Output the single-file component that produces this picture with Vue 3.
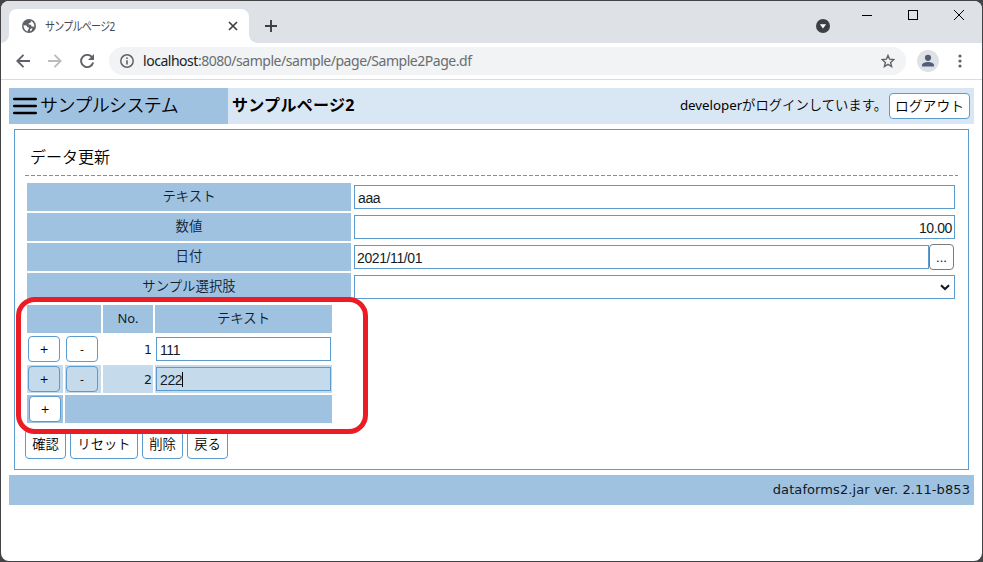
<script setup>
import { ref } from 'vue'

const fields = ref([
  { label: 'テキスト', value: 'aaa', kind: 'text' },
  { label: '数値', value: '10.00', kind: 'number' },
  { label: '日付', value: '2021/11/01', kind: 'date' },
  { label: 'サンプル選択肢', value: '', kind: 'select' },
])
const rows = ref([
  { no: 1, value: '111', active: false },
  { no: 2, value: '222', active: true },
])
const actions = ['確認', 'リセット', '削除', '戻る']
</script>

<template>
  <div class="desktop">
    <div class="window">
      <div class="tabstrip">
        <div class="tab">
          <svg class="globe" width="14" height="14" viewBox="0 0 14 14">
            <circle cx="7" cy="7" r="7" fill="#5f6368" />
            <path d="M1.5 6.3 4.6 6.4 5.3 8.2 7.1 8.6 6.7 10 5.9 10.9 5.8 12.4C3.3 11.9 1.5 9.7 1.5 6.3Z" fill="#fff" />
            <path d="M7 1.7 9.4 2.1 8.4 3.8 6.8 4.3 6.6 5.5 8.9 5.7 9.6 7.6 12.3 7.7C12.7 4.5 10.5 1.8 7 1.7Z" fill="#fff" />
            <path d="M8 10.2 10.4 9.1 9.8 11.2 8 12.2Z" fill="#fff" />
          </svg>
          <span class="tab-title">サンプルページ2</span>
          <svg class="tab-close" width="10" height="10" viewBox="0 0 10 10"><path d="M1 1 9 9M9 1 1 9" stroke="#3c4043" stroke-width="1.7" /></svg>
        </div>
        <svg class="newtab" width="12" height="12" viewBox="0 0 12 12"><path d="M6 0V12M0 6H12" stroke="#3c4043" stroke-width="1.9" /></svg>
        <div class="controls">
          <svg class="tabsearch" width="14" height="14" viewBox="0 0 14 14"><circle cx="7" cy="7" r="7" fill="#3c4043" /><path d="M3.9 5.2H10.1L7 9.4Z" fill="#fff" /></svg>
          <svg width="10" height="10" viewBox="0 0 10 10"><path d="M0 5.5H10" stroke="#000" /></svg>
          <svg width="10" height="10" viewBox="0 0 10 10"><rect x=".5" y=".5" width="9" height="9" fill="none" stroke="#000" /></svg>
          <svg width="10" height="10" viewBox="0 0 10 10"><path d="M0 0 10 10M10 0 0 10" stroke="#000" stroke-width="1" /></svg>
        </div>
      </div>
      <div class="toolbar">
        <svg class="back" width="14" height="14" viewBox="0 0 14 14"><path d="M14 7H1.4M7.5.8 1.3 7 7.5 13.2" fill="none" stroke="#5f6368" stroke-width="1.9" /></svg>
        <svg class="forward" width="14" height="14" viewBox="0 0 14 14"><path d="M0 7H12.6M6.5.8 12.7 7 6.5 13.2" fill="none" stroke="#babcbe" stroke-width="1.9" /></svg>
        <svg class="reload" width="14" height="14" viewBox="0 0 14 14"><path d="M12 3.2A6.1 6.1 0 1 0 13.1 8.6" fill="none" stroke="#5f6368" stroke-width="1.9" /><path d="M14 0V6H8Z" fill="#5f6368" /></svg>
        <div class="address">
          <svg width="14" height="14" viewBox="0 0 14 14"><circle cx="7" cy="7" r="6.2" fill="none" stroke="#5f6368" stroke-width="1.5" /><path d="M7 6.2V10.4M7 3.5V5" stroke="#5f6368" stroke-width="1.6" /></svg>
          <span class="url"><b>localhost</b>:8080/sample/sample/page/Sample2Page.df</span>
          <svg class="star" width="14" height="14" viewBox="0 0 14 14"><path d="M7 1.4 8.6 5.2 12.8 5.6 9.6 8.4 10.6 12.5 7 10.3 3.4 12.5 4.4 8.4 1.2 5.6 5.4 5.2Z" fill="none" stroke="#5f6368" stroke-width="1.4" /></svg>
        </div>
        <svg class="avatar" width="22" height="22" viewBox="0 0 22 22"><circle cx="11" cy="11" r="11" fill="#dee1e6" /><circle cx="11" cy="7.8" r="3.1" fill="#525d75" /><path d="M5 16.6V15C5 13 8.5 11.9 11 11.9S17 13 17 15V16.6Z" fill="#525d75" /></svg>
        <svg class="dots" width="4" height="14" viewBox="0 0 4 14"><g fill="#5f6368"><circle cx="2" cy="2" r="1.6" /><circle cx="2" cy="7" r="1.6" /><circle cx="2" cy="12" r="1.6" /></g></svg>
      </div>

      <div class="page">
        <header class="header">
          <div class="system">
            <svg width="24" height="18" viewBox="0 0 24 18"><path d="M1.2 2H22.8M1.2 9H22.8M1.2 16H22.8" stroke="#000" stroke-width="2.4" stroke-linecap="round" /></svg>
            <span class="system-name">サンプルシステム</span>
          </div>
          <span class="page-name">サンプルページ2</span>
          <span class="login"><span class="user">developer</span>がログインしています。</span>
          <button class="btn logout">ログアウト</button>
        </header>

        <main class="panel">
          <h1 class="title">データ更新</h1>
          <svg class="rule" width="933" height="1"><path d="M0 .5H933" stroke="#5c9bcd" stroke-dasharray="4 2" /></svg>
          <div class="form">
            <div v-for="f in fields" :key="f.label" class="field">
              <div class="label">{{ f.label }}</div>
              <div class="value">
                <div class="input" :class="f.kind">
                  <span>{{ f.value }}</span>
                  <svg v-if="f.kind === 'select'" width="10" height="7" viewBox="0 0 10 7"><path d="M1 1.2 5 5.1 9 1.2" fill="none" stroke="#111c28" stroke-width="2.1" /></svg>
                </div>
                <button v-if="f.kind === 'date'" class="btn picker">...</button>
              </div>
            </div>
          </div>

          <section class="detail">
            <div class="line head">
              <div class="cell"></div>
              <div class="cell center latin">No.</div>
              <div class="cell center">テキスト</div>
            </div>
            <div v-for="r in rows" :key="r.no" class="line" :class="{ active: r.active }">
              <div class="cell"><button class="btn small">+</button></div>
              <div class="cell"><button class="btn small">-</button></div>
              <div class="cell number-cell">{{ r.no }}</div>
              <div class="cell"><div class="input"><span>{{ r.value }}</span><i v-if="r.active" class="caret"></i></div></div>
            </div>
            <div class="line foot">
              <div class="cell"><button class="btn small">+</button></div>
              <div class="cell"></div>
            </div>
            <div class="highlight"></div>
          </section>

          <div class="actions">
            <button v-for="a in actions" :key="a" class="btn">{{ a }}</button>
          </div>
        </main>

        <footer class="footer">dataforms2.jar ver. 2.11-b853</footer>
      </div>
    </div>
  </div>
</template>

<style>
body { margin: 0; overflow: hidden; }
</style>

<style scoped>
* { box-sizing: border-box; }
svg { display: block; flex: none; }
.desktop { width: 983px; height: 562px; padding: 1px; background: #444346; font-family: "Noto Sans", "Noto Sans CJK JP", sans-serif; font-size: 13px; color: #000; }
.window { width: 981px; height: 560px; border-radius: 8px; background: #fff; overflow: hidden; }

.tabstrip { display: flex; height: 42px; padding: 8px 18px 0 8px; background: #dee1e6; }
.tab { position: relative; display: flex; align-items: center; width: 240px; height: 34px; padding: 0 12px 0 13px; background: #fff; border-radius: 8px 8px 0 0; }
.tab::before, .tab::after { content: ""; position: absolute; bottom: 0; width: 8px; height: 8px; }
.tab::before { left: -8px; background: radial-gradient(circle at 0 0, transparent 7.5px, #fff 8px); }
.tab::after { right: -8px; background: radial-gradient(circle at 100% 0, transparent 7.5px, #fff 8px); }
.tab-title { flex: 1; margin-left: 9px; padding-top: 1px; font-size: 12.5px; line-height: 18px; color: #45494d; letter-spacing: -.9px; white-space: nowrap; transform: scaleX(.8); transform-origin: 0 50%; }
.tab-close { margin-right: -1px; }
.newtab { margin: 11px 0 0 16px; }
.controls { display: flex; gap: 36px; margin-left: auto; padding-top: 1px; }
.tabsearch { margin: 9px -4px 0 0; }

.toolbar { display: flex; align-items: center; height: 37px; padding: 0 20px 0 15px; border-bottom: 1px solid #dadce0; }
.forward { margin-left: 18px; }
.reload { margin-left: 18px; }
.address { display: flex; align-items: center; width: 797px; height: 28px; margin-left: 15px; padding: 0 11px; border-radius: 14px; background: #f1f3f4; }
.url { margin-left: 9px; flex: 1; font-size: 14px; line-height: 20px; color: #696d71; letter-spacing: -.47px; white-space: nowrap; }
.url b { font-weight: 400; color: #202124; }
.avatar { margin-left: 11px; }
.dots { margin-left: auto; }

.page { padding: 8px; font-family: "Noto Sans", "Noto Sans CJK JP", sans-serif; font-weight: 350; }
.header { display: flex; align-items: center; width: 965px; height: 36px; padding-right: 4px; background: #d9e6f4; }
.system { display: flex; align-items: center; width: 219px; height: 36px; padding-left: 4px; background: #a0c2e1; }
.system-name { margin-left: 3px; padding-bottom: 2px; font-size: 18px; line-height: 26px; letter-spacing: -.6px; white-space: nowrap; }
.page-name { margin-left: 4px; padding-bottom: 2px; font-size: 16px; line-height: 24px; font-weight: 700; letter-spacing: .3px; white-space: nowrap; }
.login { margin-left: auto; padding-bottom: 3px; font-size: 13.33px; white-space: nowrap; }
.user { font-weight: 400; letter-spacing: -.03px; }

.btn { display: flex; align-items: center; justify-content: center; height: 26px; padding: 0 0 2px; border: 1px solid #5c9bcd; border-radius: 4px; background: #fff; color: #000; font: inherit; font-size: 13.33px; white-space: nowrap; }
.logout { width: 81px; margin-left: 2px; font-size: 13.8px; }

.panel { width: 955px; height: 341px; margin: 5px 0 0 5px; border: 1px solid #5c9bcd; padding: 0 10px; }
.title { height: 45px; margin: 0; padding: 14px 0 0 5px; font-size: 16px; line-height: 26px; font-weight: 350; }
.form { display: flex; flex-direction: column; gap: 2px; padding: 7px 2px 0; }
.field { display: flex; height: 28px; gap: 3px; }
.label { display: flex; align-items: center; justify-content: center; width: 324px; padding-bottom: 4px; background: #a0c2e1; color: #10202f; font-size: 13.4px; }
.value { display: flex; align-items: center; width: 601px; }
.input { display: flex; align-items: center; flex: 1; height: 24px; padding: 1px 3px 0; border: 1px solid #5c9bcd; background: #fff; color: #111c28; font-family: "Liberation Sans", sans-serif; font-size: 14px; letter-spacing: -.4px; font-weight: 400; }
.number { justify-content: flex-end; padding-right: 2px; }
.date { padding-left: 2px; }
.select { justify-content: flex-end; padding-right: 4px; }
.picker { width: 25px; margin-right: 1px; border-color: #7b7b7b; padding: 0; font-family: "Liberation Sans", sans-serif; font-size: 13px; }

.detail { position: relative; display: flex; flex-direction: column; gap: 2px; width: 305px; padding-top: 4px; margin-left: 2px; color: #111c28; }
.line { display: grid; grid-template-columns: 36px 36px 50px 177px; gap: 2px; height: 28px; }
.head { grid-template-columns: 74px 50px 177px; }
.foot { grid-template-columns: 36px 267px; }
.cell { display: flex; align-items: center; padding: 0 1px; }
.head .cell, .foot .cell { background: #a0c2e1; }
.head .cell { padding-bottom: 4px; font-size: 13.4px; }
.head .latin { padding-bottom: 2px; font-weight: 400; font-size: 13px; }
.active .cell, .active .input, .active .btn { background: #c5daeb; }
.center { justify-content: center; }
.number-cell { justify-content: flex-end; font-family: "DejaVu Sans", sans-serif; font-weight: 400; font-size: 12.5px; }
.small { width: 32px; padding: 0; font-family: "DejaVu Sans", sans-serif; font-size: 11px; font-weight: 400; }
.foot .small { margin-left: 1px; }
.caret { width: 1px; height: 15px; background: #000; }
.highlight { position: absolute; left: -11px; top: -4px; width: 352px; height: 137px; border: 5px solid #ed1c24; border-radius: 19px; }

.actions { display: flex; gap: 4px; margin-top: 6px; }
.actions .btn { width: 41px; height: 30px; }
.actions .btn:nth-child(2) { width: 68px; }

.footer { width: 965px; height: 30px; margin-top: 5px; padding-right: 4px; background: #a0c2e1; color: #10181f; font-family: "DejaVu Sans", sans-serif; font-weight: 400; font-size: 13px; letter-spacing: .09px; line-height: 29px; text-align: right; }
</style>
